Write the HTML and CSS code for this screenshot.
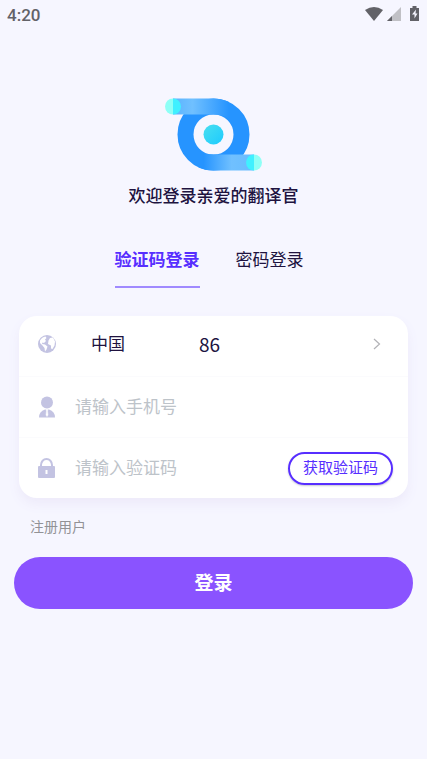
FILE: index.html
```html
<!DOCTYPE html>
<html lang="zh-CN">
<head>
<meta charset="utf-8">
<meta name="viewport" content="width=device-width, initial-scale=1">
<title>登录</title>
<link rel="stylesheet" href="styles.css">
</head>
<body>
<header class="status">
  <span>4:20</span>
  <svg class="status-icons" width="56" height="16" viewBox="0 0 56 16" aria-hidden="true">
    <path d="M0 4Q9-2 18 4L9 15Z" fill="#626268"/>
    <path d="M36 1V15H22Z" fill="#c0c0c5"/>
    <path d="M27 10V15H22Z" fill="#626268"/>
    <path d="M47.500 0h4v2h2.500v13h-9V2h2.500Z" fill="#626268"/>
    <path d="M51 3.500l-4 5h2.500v4l3-5h-2Z" fill="#f6f6ff"/>
  </svg>
</header>
<main class="page">
  <svg class="logo" width="98" height="74" viewBox="0 0 98 74" role="img" aria-label="翻译官">
    <defs>
      <linearGradient id="top"><stop offset="0" stop-color="#5ab4ff"/><stop offset=".35" stop-color="#70c0ff"/><stop offset="1" stop-color="#2694ff"/></linearGradient>
      <linearGradient id="bottom"><stop offset=".1" stop-color="#2694ff"/><stop offset=".6" stop-color="#70c0ff"/><stop offset="1" stop-color="#68bcff"/></linearGradient>
      <linearGradient id="core" x2="1" y2="1"><stop offset="0" stop-color="#48dfef"/><stop offset="1" stop-color="#1dcaff"/></linearGradient>
    </defs>
    <circle cx="48.500" cy="36.500" r="28" fill="none" stroke="#2694ff" stroke-width="16"/>
    <path d="M8 .5H48.500Q57 .5 64 4V20Q57 16.500 48.500 16.500H8Z" fill="url(#top)"/>
    <path d="M89 72.500H48.500Q40 72.500 33 69V53Q40 56.500 48.500 56.500H89Z" fill="url(#bottom)"/>
    <path d="M8 .5a8 8 0 0 0 0 16Z" fill="#8efff6"/>
    <path d="M8 .5a8 8 0 0 1 0 16Z" fill="#40f0ff"/>
    <path d="M89 56.500a8 8 0 0 0 0 16Z" fill="#40f0ff"/>
    <path d="M89 56.500a8 8 0 0 1 0 16Z" fill="#8efff6"/>
    <circle cx="48.500" cy="36.500" r="10" fill="url(#core)"/>
  </svg>
  <h1 class="title">欢迎登录亲爱的翻译官</h1>
  <nav class="tabs">
    <button class="tab tab-active" type="button">验证码登录</button>
    <button class="tab" type="button">密码登录</button>
  </nav>
  <form class="form">
    <div class="card">
      <button class="row region" type="button">
        <svg class="icon" width="20" height="22" viewBox="0 0 20 22" aria-hidden="true">
          <circle cx="10" cy="11" r="9" fill="#c3c3e2"/>
          <path d="M3 7.500Q5 4 8.500 3.500L9.500 5 8 6.500 9 8 7 10 5.500 9.500 5 11l3 .5 2.500 2L9.500 16.500 8 18.500 7.500 15 5.500 12.500 3 10ZM13 5l3-.5 2 4-.5 4-2 3.500-1.500-.5v-3l-3-1.500.5-3.500Z" fill="#fff"/>
        </svg>
        <span class="country">中国</span>
        <span class="code">86</span>
        <svg class="chevron" width="8" height="12" viewBox="0 0 8 12" aria-hidden="true"><path d="M1 1l5.500 5L1 11" fill="none" stroke="#b2b2b6" stroke-width="1.200"/></svg>
      </button>
      <div class="row">
        <svg class="icon" width="20" height="22" viewBox="0 0 20 22" aria-hidden="true">
          <circle cx="10" cy="6.500" r="6" fill="#c3c3e2"/>
          <path d="M2 21.500q0-6 6-8h4q6 2 6 8Z" fill="#c3c3e2"/>
          <path d="M9 13.500h2l-.5 1.500.5 4-1 1.500L9 19l.5-4Z" fill="#fff" stroke="#fff" stroke-width=".5"/>
        </svg>
        <input class="field" type="tel" aria-label="手机号" placeholder="请输入手机号">
      </div>
      <div class="row">
        <svg class="icon" width="20" height="22" viewBox="0 0 20 22" aria-hidden="true">
          <path d="M4 10V8a5.500 6 0 0 1 11 0v2" fill="none" stroke="#c3c3e2" stroke-width="2"/>
          <rect x="1" y="9" width="17" height="12" rx="1" fill="#c3c3e2"/>
          <rect x="8.500" y="13" width="2" height="4" fill="#fff"/>
        </svg>
        <input class="field" type="text" aria-label="验证码" placeholder="请输入验证码">
        <button class="get-code" type="button">获取验证码</button>
      </div>
    </div>
    <a class="register" href="#register">注册用户</a>
    <button class="submit" type="submit">登录</button>
  </form>
</main>
</body>
</html>
```
FILE: styles.css
```css
* { box-sizing: border-box; }

body {
  margin: 0;
  min-height: 100vh;
  background: #f6f6ff;
  color: #20133f;
  font-family: Roboto, "Noto Sans CJK SC", sans-serif;
  font-size: 17px;
  line-height: 24px;
}

button, input {
  margin: 0;
  padding: 0;
  border: 0;
  background: none;
  color: inherit;
  font: inherit;
}

.status {
  display: flex;
  align-items: center;
  justify-content: space-between;
  height: 30px;
  padding: 0 6px 0 7px;
  color: #626268;
  font-weight: 500;
}

.status-icons { margin-bottom: 2px; }

.page {
  display: flex;
  flex-direction: column;
  align-items: center;
  padding: 68px 14px 0;
}

.logo { display: block; }

.title {
  margin: 12px 0 0;
  font-size: 17px;
  font-weight: 500;
  line-height: 24px;
}

.tabs {
  display: flex;
  gap: 36px;
  margin: 34px 0 28px;
  padding-right: 9px;
}

.tab {
  height: 46px;
  padding: 6px 0 14px;
  border-bottom: 2px solid transparent;
}

.tab-active {
  border-color: #a08aff;
  color: #572eff;
  font-weight: 700;
}

.form { width: 100%; }

.card {
  margin: 0 5px;
  border-radius: 18px;
  background: #fff;
  box-shadow: 0 6px 12px #edeafa;
}

.row {
  display: flex;
  align-items: center;
  width: 100%;
  height: 61px;
  padding: 0 15px 0 18px;
  text-align: left;
}

.row + .row { border-top: 1px solid #fbfbfd; }

.region { height: 60px; padding: 0 27px 4px 18px; }

.icon { flex: none; }

.country { width: 108px; margin-left: 34px; }

.code {
  flex: 1;
  font-family: "Noto Sans CJK SC", sans-serif;
  font-size: 19px;
}

.field {
  flex: 1;
  min-width: 0;
  margin-left: 18px;
  outline: 0;
}

.field::placeholder { color: #bdc3c9; opacity: 1; }

.get-code {
  width: 105px;
  height: 33px;
  border: 2px solid #572eff;
  border-radius: 17px;
  box-shadow: 0 1px 2px #c8c8d0;
  color: #572eff;
  font-size: 15px;
}

.register {
  display: block;
  width: fit-content;
  margin: 17px 16px 18px;
  color: #929296;
  font-size: 14px;
  text-decoration: none;
}

.submit {
  width: 100%;
  height: 52px;
  padding-top: 2px;
  border-radius: 26px;
  background: #8a53ff;
  color: #fff;
  font-size: 19px;
  font-weight: 700;
}
```
